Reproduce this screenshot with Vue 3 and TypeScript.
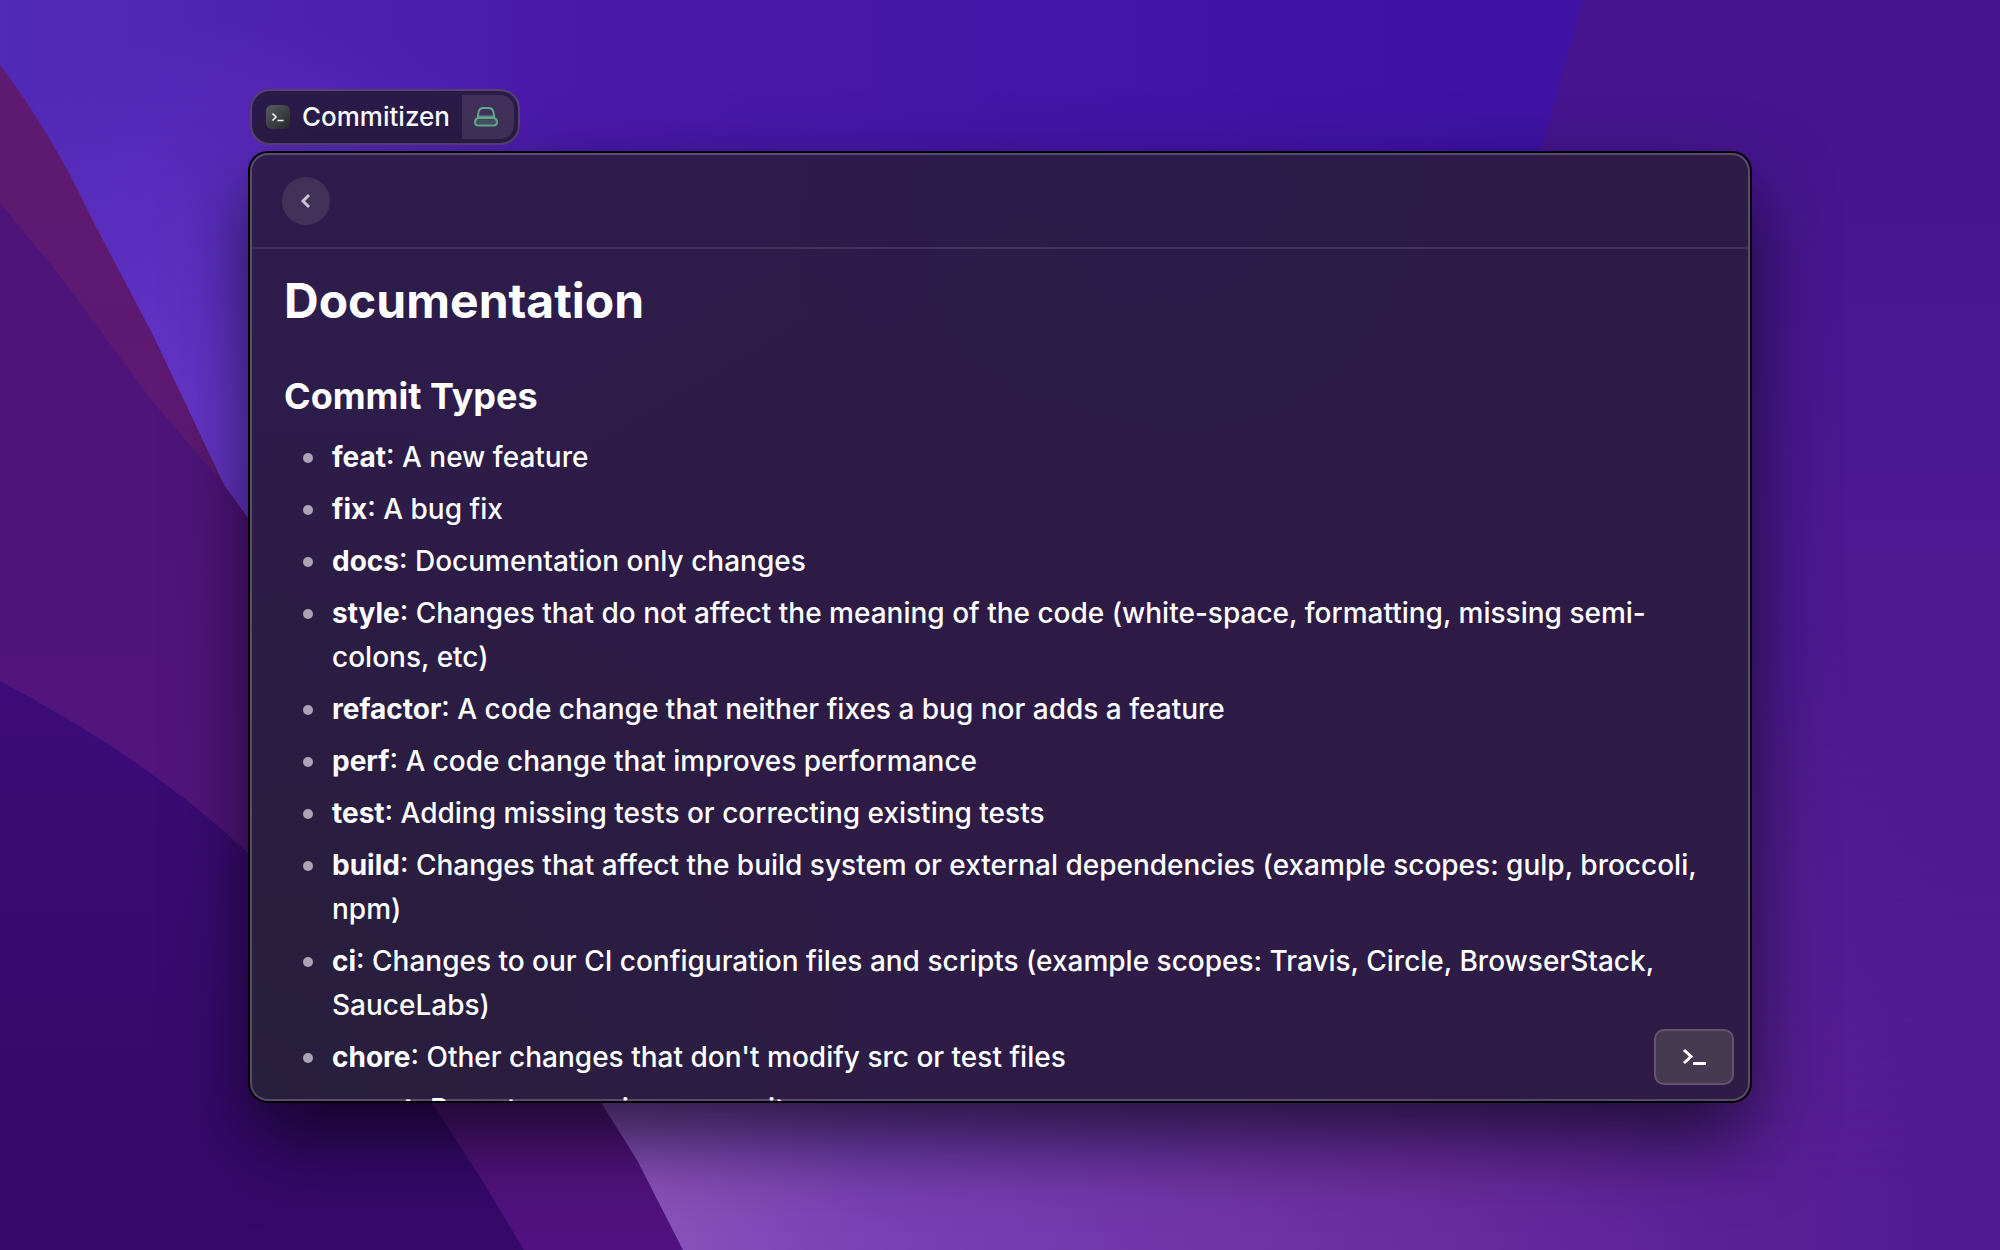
<script setup lang="ts">
interface CommitType {
  name: string
  description: string
}

const commitTypes: CommitType[] = [
  { name: 'feat', description: 'A new feature' },
  { name: 'fix', description: 'A bug fix' },
  { name: 'docs', description: 'Documentation only changes' },
  {
    name: 'style',
    description:
      'Changes that do not affect the meaning of the code (white-space, formatting, missing semi-colons, etc)',
  },
  { name: 'refactor', description: 'A code change that neither fixes a bug nor adds a feature' },
  { name: 'perf', description: 'A code change that improves performance' },
  { name: 'test', description: 'Adding missing tests or correcting existing tests' },
  {
    name: 'build',
    description:
      'Changes that affect the build system or external dependencies (example scopes: gulp, broccoli, npm)',
  },
  {
    name: 'ci',
    description:
      'Changes to our CI configuration files and scripts (example scopes: Travis, Circle, BrowserStack, SauceLabs)',
  },
  { name: 'chore', description: "Other changes that don't modify src or test files" },
  { name: 'revert', description: 'Reverts a previous commit' },
]
</script>

<template>
  <div class="desktop">
    <svg class="wallpaper" viewBox="0 0 2000 1250" preserveAspectRatio="none" aria-hidden="true">
      <defs>
        <linearGradient id="sky" x1="0" y1="0" x2="1" y2="0">
          <stop offset="0" stop-color="#522ab8" />
          <stop offset="0.3" stop-color="#4a18a9" />
          <stop offset="0.75" stop-color="#3f12a4" />
          <stop offset="1" stop-color="#3f12a4" />
        </linearGradient>
        <radialGradient id="glow" gradientUnits="userSpaceOnUse" cx="260" cy="440" r="420">
          <stop offset="0" stop-color="#6a38cc" />
          <stop offset="1" stop-color="#6a38cc" stop-opacity="0" />
        </radialGradient>
        <linearGradient id="east" x1="0" y1="0" x2="0" y2="1">
          <stop offset="0" stop-color="#45148e" />
          <stop offset="0.5" stop-color="#4c1991" />
          <stop offset="1" stop-color="#531d92" />
        </linearGradient>
        <linearGradient id="floor" gradientUnits="userSpaceOnUse" x1="600" y1="0" x2="1950" y2="0">
          <stop offset="0" stop-color="#8e56bc" />
          <stop offset="0.2" stop-color="#7841b4" />
          <stop offset="0.6" stop-color="#6a2d9f" />
          <stop offset="0.85" stop-color="#582095" />
          <stop offset="1" stop-color="#501b92" />
        </linearGradient>
        <linearGradient id="fade" x1="0" y1="0" x2="0" y2="1">
          <stop offset="0.5" stop-color="#000" />
          <stop offset="0.95" stop-color="#fff" />
        </linearGradient>
        <mask id="low"><rect width="2000" height="1250" fill="url(#fade)" /></mask>
        <linearGradient id="maroon" x1="0" y1="0" x2="0" y2="1">
          <stop offset="0" stop-color="#5f1b70" />
          <stop offset="0.5" stop-color="#5c1876" />
          <stop offset="1" stop-color="#4f1280" />
        </linearGradient>
        <linearGradient id="plum" x1="0" y1="0" x2="0" y2="1">
          <stop offset="0" stop-color="#4d1479" />
          <stop offset="1" stop-color="#541680" />
        </linearGradient>
        <linearGradient id="deep" x1="0" y1="0" x2="0" y2="1">
          <stop offset="0" stop-color="#3d0c78" />
          <stop offset="0.6" stop-color="#380a6e" />
          <stop offset="1" stop-color="#36086a" />
        </linearGradient>
      </defs>
      <rect width="2000" height="1250" fill="url(#sky)" />
      <rect width="2000" height="1250" fill="url(#glow)" />
      <path d="M1583 0H2000V1250H1200V900L1500 300Z" fill="url(#east)" />
      <rect width="2000" height="1250" fill="url(#floor)" mask="url(#low)" />
      <path
        d="M0 65Q50 130 92 219L153 335L191 415L226 489Q236 508 248 520Q450 760 602 1104L637 1160L683 1250H0Z"
        fill="url(#maroon)"
      />
      <path d="M0 203L57 272L153 402L222 482L300 590L450 1000L433 1104L200 900L0 700Z" fill="url(#plum)" />
      <path d="M0 681Q150 760 248 853Q350 950 433 1104L482 1180L524 1250H0Z" fill="url(#deep)" />
    </svg>

    <header class="command">
      <svg class="command-icon" viewBox="0 0 24 24" aria-hidden="true">
        <defs>
          <linearGradient id="tile" x1="0" y1="0" x2="1" y2="1">
            <stop offset="0" stop-color="#5b5f65" />
            <stop offset="1" stop-color="#25282a" />
          </linearGradient>
        </defs>
        <rect width="24" height="24" rx="6" fill="url(#tile)" />
        <path
          d="M6.5 8.5L10 12L6.5 15.500M11.500 15.500H17.500"
          fill="none"
          stroke="#fff"
          stroke-width="1.600"
        />
      </svg>
      <span class="command-name">Commitizen</span>
      <span class="command-badge">
        <svg viewBox="0 0 24 20" aria-hidden="true">
          <g fill="none" stroke="#62ab8b" stroke-width="2" stroke-linejoin="round">
            <path d="M4 11V8Q4.500 1 9 1H15Q19.500 1 20 8V11" />
            <path d="M4 11H20Q23 12 23 15Q23 18.500 19.500 18.500H4.500Q1 18.500 1 15Q1 12 4 11Z" />
            <path d="M4 10H20" stroke-opacity="0.8" stroke-width="3" />
            <path d="M2 15H22" stroke-opacity="0.25" stroke-width="5" />
          </g>
        </svg>
      </span>
    </header>

    <main class="window">
      <nav class="toolbar">
        <button class="back" type="button" aria-label="Back">
          <svg viewBox="0 0 10 16" aria-hidden="true">
            <path d="M8 2L2 8L8 14" fill="none" stroke="#cbc4d4" stroke-width="3" />
          </svg>
        </button>
      </nav>

      <article class="document">
        <h1>Documentation</h1>
        <h2>Commit Types</h2>
        <ul>
          <li v-for="type in commitTypes" :key="type.name">
            <strong>{{ type.name }}</strong>: {{ type.description }}
          </li>
        </ul>
      </article>

      <button class="actions" type="button" aria-label="Open actions">
        <svg viewBox="0 0 24 18" aria-hidden="true">
          <path d="M2 2L9 8.500L2 15" fill="none" stroke="#fff" stroke-width="3" />
          <path d="M11 15.500H24" stroke="#fff" stroke-width="3" />
        </svg>
      </button>
    </main>
  </div>
</template>

<style>
body {
  margin: 0;
}
</style>

<style scoped>
.desktop {
  position: relative;
  isolation: isolate;
  box-sizing: border-box;
  display: flex;
  flex-direction: column;
  align-items: flex-start;
  gap: 8px;
  height: 100vh;
  padding: 89px 12.5% 149px;
  overflow: hidden;
  color: #fff;
  font-family: Inter, "Liberation Sans", sans-serif;
  font-optical-sizing: none;
}

.wallpaper {
  position: absolute;
  inset: 0;
  z-index: -1;
  width: 100%;
  height: 100%;
}

.command {
  box-sizing: border-box;
  display: flex;
  flex: none;
  align-items: center;
  height: 56px;
  padding: 4px 4px 4px 14px;
  border: 2px solid #55456a;
  border-radius: 20px;
  background: #2b1b48;
}

.command-icon {
  width: 24px;
  height: 24px;
}

.command-name {
  margin: 0 12px;
  font-size: 26px;
  font-weight: 500;
  line-height: 44px;
}

.command-badge {
  box-sizing: border-box;
  display: flex;
  align-items: center;
  width: 52px;
  height: 44px;
  padding-left: 12px;
  border-radius: 0 14px 14px 0;
  background: #42325b;
}

.command-badge svg {
  width: 24px;
  height: 20px;
}

.window {
  position: relative;
  box-sizing: border-box;
  display: flex;
  flex: 1;
  flex-direction: column;
  width: 100%;
  min-height: 0;
  padding: 2px 2px 0;
  border-radius: 18px;
  background:
    radial-gradient(circle at 0 100%, #281f3c 0, rgba(40, 31, 60, 0) 40%),
    radial-gradient(ellipse at 62% 6%, #291c48 0, rgba(41, 28, 72, 0) 30%),
    linear-gradient(150deg, #2e1c4d, #2d1b46 40%, #2e1c46);
  box-shadow:
    inset 0 0 0 2px #594c6b,
    0 0 0 2px #000,
    0 36px 80px rgba(0, 0, 0, 0.65);
}

.toolbar {
  display: flex;
  flex: none;
  align-items: center;
  height: 92px;
  padding: 0 30px;
  border-bottom: 2px solid #42315a;
}

.back {
  display: flex;
  align-items: center;
  justify-content: center;
  width: 48px;
  height: 48px;
  padding: 0;
  border: 0;
  border-radius: 50%;
  background: #42325a;
}

.back svg {
  width: 10px;
  height: 16px;
}

.document {
  flex: 1;
  min-height: 0;
  padding: 22px 32px 0;
  overflow: hidden;
}

h1,
h2 {
  margin: 0;
  font-weight: 700;
}

h1 {
  font-size: 48px;
  line-height: 60px;
}

h2 {
  margin-top: 43px;
  font-size: 36px;
  line-height: 44px;
}

ul {
  display: flex;
  flex-direction: column;
  gap: 8px;
  margin: 17px 0 0;
  padding: 0;
  list-style: none;
}

li {
  position: relative;
  padding-left: 48px;
  font-size: 28px;
  font-weight: 500;
  line-height: 44px;
}

li::before {
  position: absolute;
  top: 18px;
  left: 19px;
  width: 10px;
  height: 10px;
  border-radius: 50%;
  background: #aca4b6;
  content: "";
}

strong {
  font-weight: 700;
}

.actions {
  position: absolute;
  right: 16px;
  bottom: 16px;
  display: flex;
  align-items: center;
  justify-content: center;
  width: 80px;
  height: 56px;
  padding: 0;
  border: 2px solid #62566f;
  border-radius: 10px;
  background: #453a51;
}

.actions svg {
  width: 24px;
  height: 18px;
}
</style>
